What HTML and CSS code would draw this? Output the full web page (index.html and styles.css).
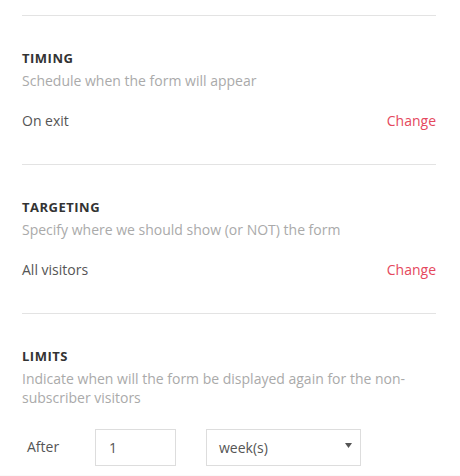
FILE: index.html
```html
<!DOCTYPE html>
<html>
<head>
<meta charset="utf-8">
<link rel="stylesheet" href="styles.css">
</head>
<body>
<div class="panel">
  <section class="block">
    <h3 class="title">TIMING</h3>
    <p class="desc">Schedule when the form will appear</p>
    <div class="row">
      <span class="value">On exit</span>
      <a class="change">Change</a>
    </div>
  </section>
  <section class="block">
    <h3 class="title">TARGETING</h3>
    <p class="desc">Specify where we should show (or NOT) the form</p>
    <div class="row">
      <span class="value">All visitors</span>
      <a class="change">Change</a>
    </div>
  </section>
  <section class="block last">
    <h3 class="title">LIMITS</h3>
    <p class="desc">Indicate when will the form be displayed again for the non-subscriber visitors</p>
    <div class="limits">
      <span class="after">After</span>
      <div class="num">1</div>
      <div class="select"><span>week(s)</span><svg class="caret" width="7" height="5" viewBox="0 0 7 5"><path d="M0 0H7L3.5 5Z" fill="#555"/></svg></div>
    </div>
  </section>
</div>
<div class="foot"></div>
</body>
</html>
```
FILE: styles.css
```css
html, body {
  margin: 0;
  padding: 0;
  background: #fff;
  font-family: "Open Sans", "Liberation Sans", sans-serif;
}
.panel {
  padding: 15px 24px 0 22px;
}
.block {
  border-top: 1px solid #e3e3e3;
  padding-top: 33px;
  padding-bottom: 33px;
}
.block.last {
  padding-bottom: 9px;
}
.title {
  margin: 0;
  font-size: 13px;
  line-height: 18px;
  font-weight: 700;
  letter-spacing: 0.5px;
  color: #333;
}
.desc {
  margin: 4px 0 0;
  font-size: 14px;
  line-height: 19px;
  color: #aaa;
}
.row {
  display: flex;
  justify-content: space-between;
  margin-top: 21px;
  font-size: 14px;
  line-height: 20px;
}
.value { color: #555; }
.change { color: #e5485d; cursor: pointer; }
.limits {
  display: flex;
  align-items: center;
  margin-top: 22px;
  font-size: 14px;
  color: #555;
}
.after {
  margin-left: 5px;
  width: 68px;
  margin-top: -3px;
}
.num {
  box-sizing: border-box;
  width: 81px;
  height: 37px;
  border: 1px solid #ddd;
  padding: 0 13px;
  line-height: 35px;
  color: #555;
}
.select {
  box-sizing: border-box;
  margin-left: 30px;
  width: 155px;
  height: 37px;
  border: 1px solid #ddd;
  padding: 0 8px 0 12px;
  display: flex;
  justify-content: space-between;
  align-items: center;
  color: #555;
}
.caret {
  margin-top: -4px;
}
.foot {
  height: 20px;
  background: #fafafa;
}
```
